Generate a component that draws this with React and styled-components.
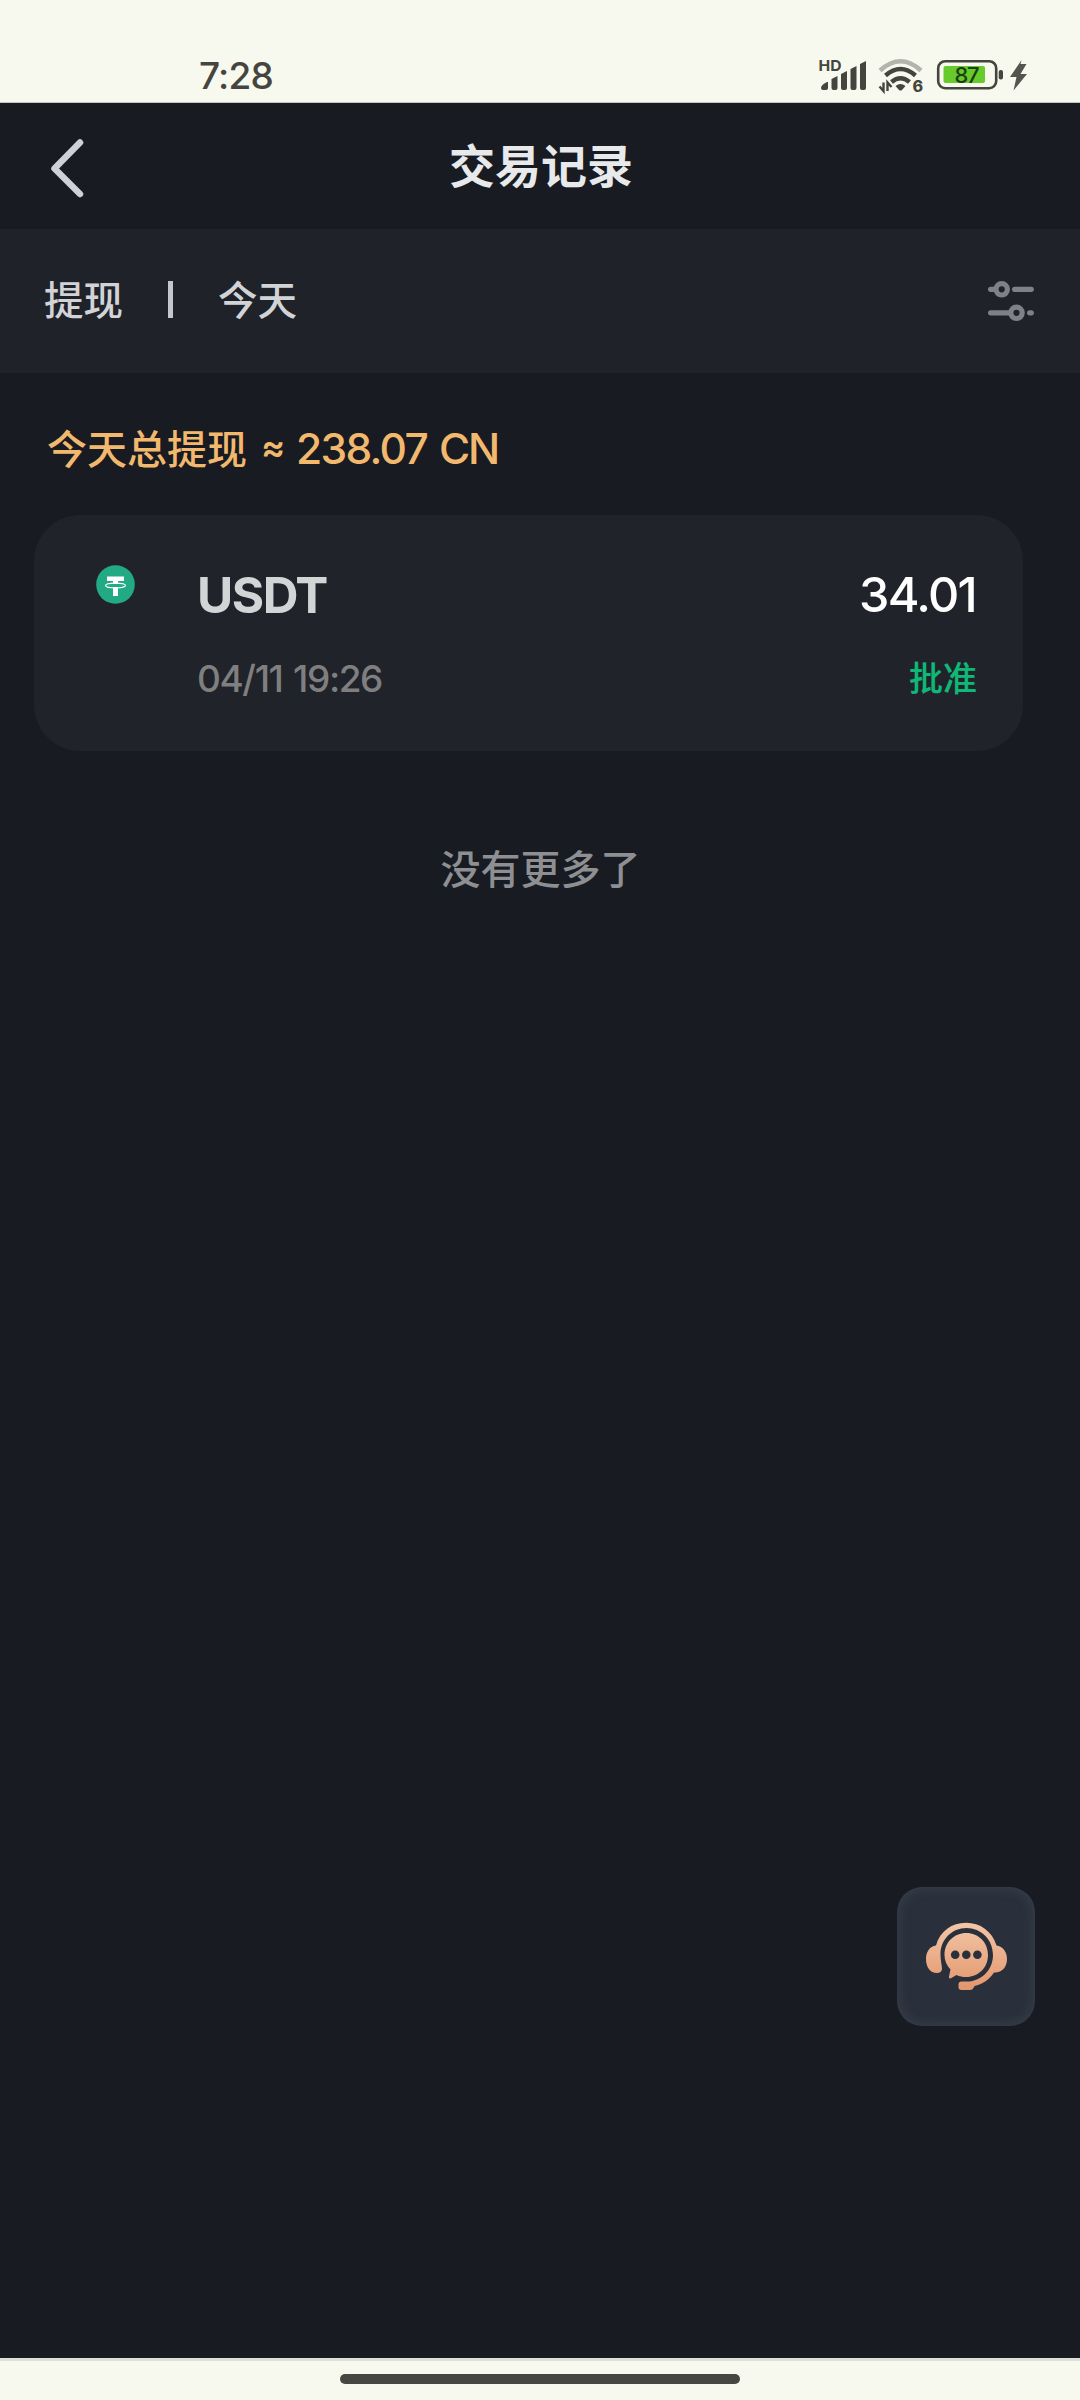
import React from 'react';
import styled, { createGlobalStyle } from 'styled-components';

const GlobalStyle = createGlobalStyle`
  body {
    margin: 0;
    background: #181b22;
    font-family: Inter, 'Noto Sans CJK SC', sans-serif;
    font-weight: 500;
  }
  * {
    box-sizing: border-box;
  }
`;

const Screen = styled.div`
  display: flex;
  flex-direction: column;
  width: 1080px;
  height: 2400px;
  background: #181b22;
  overflow: hidden;
`;

const StatusBar = styled.div`
  display: flex;
  justify-content: space-between;
  height: 103px;
  padding: 54px 50px 0 199px;
  background: #f8f9ee;
  border-bottom: 1px solid #c4c6c0;
`;

const Clock = styled.span`
  font-size: 37px;
  line-height: 43px;
  letter-spacing: -0.8px;
  color: #454540;
`;

const StatusIcons = styled.svg`
  display: block;
  width: 216px;
  height: 42px;
`;

const Header = styled.header`
  display: grid;
  grid-template-columns: 120px 1fr 118px;
  align-items: center;
  height: 126px;
`;

const BackButton = styled.button`
  width: 120px;
  height: 126px;
  padding: 0;
  border: none;
  background: none;
`;

const Title = styled.h1`
  margin: 0;
  font-size: 46px;
  font-weight: 700;
  line-height: 124px;
  text-align: center;
  color: #e8e9ea;
`;

const FilterBar = styled.div`
  display: flex;
  align-items: center;
  justify-content: space-between;
  height: 144px;
  padding: 0 45px 0 44px;
  background: #1f2229;
`;

const Filters = styled.div`
  display: flex;
  align-items: center;
  font-size: 39.5px;
  line-height: 60px;
  color: #d2d3d7;
`;

const Divider = styled.span`
  width: 5px;
  height: 37px;
  margin: 0 45px 3px 45px;
  background: #c6c7cb;
`;

const FilterGlyph = styled.svg`
  width: 48px;
  height: 48px;
  margin-bottom: 2px;
`;

const Content = styled.main`
  flex: 1;
  padding: 46px 0 0;
`;

const Summary = styled.div`
  display: flex;
  align-items: baseline;
  height: 60px;
  padding-left: 47px;
  font-size: 40px;
  line-height: 60px;
  white-space: pre;
  color: #f2b96e;
`;

const Approx = styled.span`
  width: 20px;
  margin: 0 15px 0 14px;
  font-size: 36px;
  font-weight: 600;
  line-height: 1;
  transform: translateY(-4px);
`;

const Total = styled.span`
  font-size: 42.5px;
  letter-spacing: ${(props) => props.$spacing || '0'};
  margin-right: ${(props) => props.$gap || '0'};
`;

const Card = styled.section`
  display: flex;
  width: 989px;
  height: 236px;
  margin: 36px 0 0 34px;
  padding: 0 46px 0 62px;
  border-radius: 46px;
  background: #20232a;
`;

const Coin = styled.svg`
  flex: none;
  width: 39px;
  height: 39px;
  margin-top: 50px;
`;

const Column = styled.div`
  display: flex;
  flex-direction: column;
  align-items: ${(props) => (props.$end ? 'flex-end' : 'flex-start')};
  margin-left: ${(props) => (props.$end ? 'auto' : '62px')};
  padding-top: 50px;
`;

const Currency = styled.span`
  font-size: 49.5px;
  font-weight: 700;
  line-height: 60px;
  letter-spacing: -1.5px;
  color: #d3d4d6;
`;

const Amount = styled.span`
  font-size: 48.5px;
  line-height: 60px;
  letter-spacing: -1.7px;
  margin-right: 1px;
  color: #ffffff;
`;

const Time = styled.span`
  margin-top: 24px;
  font-size: 37px;
  line-height: 60px;
  letter-spacing: -1.4px;
  word-spacing: 2px;
  color: #7f7f80;
`;

const Status = styled.span`
  margin-top: 24px;
  font-size: 34px;
  line-height: 60px;
  color: #0fb876;
  -webkit-text-stroke: 0.2px #0fb876;
`;

const EndOfList = styled.p`
  margin: 89px 0 0;
  padding-left: 1px;
  font-size: 40px;
  line-height: 60px;
  text-align: center;
  color: #8e8f92;
`;

const SupportButton = styled.button`
  position: fixed;
  left: 897px;
  top: 1887px;
  width: 138px;
  height: 139px;
  padding: 0;
  border: none;
  border-radius: 25px;
  background: #29303b;
  box-shadow: inset 0 0 14px rgba(130, 138, 150, 0.2);

  svg {
    display: block;
  }
`;

const NavBar = styled.div`
  display: flex;
  justify-content: center;
  height: 42px;
  padding-top: 13px;
  border-top: 3px solid #dfe0d8;
  background: #f8f9ee;
`;

const HomeIndicator = styled.div`
  width: 400px;
  height: 10px;
  border-radius: 5px;
  background: #474742;
`;

const DeviceStatus = () => (
  <StatusIcons viewBox="814 54 216 42">
    <text x="818.5" y="71" fontSize="15" fontWeight="700" fill="#454540" textLength="23" lengthAdjust="spacingAndGlyphs">HD</text>
    <g fill="#454540">
      <path d="M821 88q0-3 6-6h1v6q0 2-2 2h-3q-2 0-2-2z" />
      <path d="M831.5 79l6-3v12q0 2-2 2h-2q-2 0-2-2z" />
      <path d="M841 74l6-3v17q0 2-2 2h-2q-2 0-2-2z" />
      <path d="M850.5 69l6-3v22q0 2-2 2h-2q-2 0-2-2z" />
      <path d="M860 64l6-3v27q0 2-2 2h-2q-2 0-2-2z" />
    </g>
    <g fill="none" strokeWidth="4.5">
      <path d="M880 70.5Q900.5 52 921 70.5" stroke="#b3b4ac" />
      <path d="M885.5 75.5Q900.5 62.5 915.5 75.5" stroke="#454540" />
      <path d="M891.5 82Q900.5 74.5 909.5 82" stroke="#454540" />
    </g>
    <path d="M895.5 86q5-4 10 0l-3.5 4q-1.5 1.2-3 0z" fill="#454540" />
    <path d="M883.5 82.5v8.5l-4-4.5M887.5 91v-8.5l4 4.5" fill="none" stroke="#454540" strokeWidth="2.4" />
    <text x="912.5" y="91.5" fontSize="16" fontWeight="800" fill="#454540">6</text>
    <rect x="938.2" y="61.2" width="58" height="27" rx="7" fill="none" stroke="#454540" strokeWidth="2.6" />
    <rect x="943.5" y="66" width="41.5" height="17" rx="2" fill="#66cb2b" />
    <text x="954.5" y="82.8" fontSize="22" fontWeight="500" fill="#1e3d12" textLength="25">87</text>
    <rect x="998.7" y="70" width="4.3" height="9.5" rx="2" fill="#454540" />
    <path d="M1021.5 60L1010 77h6.5l-3 13.5L1027 74h-6.5l6-10h-6z" fill="#55554f" />
  </StatusIcons>
);

const BackIcon = () => (
  <svg width="120" height="126" viewBox="0 103 120 126">
    <path
      d="M80 142.5L54.5 168.5L80 194"
      fill="none"
      stroke="#d0d1d6"
      strokeWidth="6.5"
      strokeLinecap="round"
      strokeLinejoin="round"
    />
  </svg>
);

const FilterIcon = () => (
  <FilterGlyph viewBox="987 276 48 48">
    <g fill="none" stroke="#808187" strokeWidth="5.2" strokeLinecap="round">
      <path d="M990.6 289.3H995M1014.6 289.3H1031.3" />
      <path d="M990.6 312.8H1010M1029.6 312.8H1031.3" />
      <circle cx="1001.7" cy="289.3" r="5.7" />
      <circle cx="1016.5" cy="312.8" r="5.7" />
    </g>
  </FilterGlyph>
);

const TetherIcon = () => (
  <Coin viewBox="0 0 39 39">
    <circle cx="19.5" cy="19.5" r="19.3" fill="#22aa84" />
    <path d="M11 11.5h17v4.5h-6v3h-5v-3h-6zM17 22h5v9h-5z" fill="#fff" />
    <ellipse cx="19.5" cy="20.5" rx="10" ry="2.4" fill="none" stroke="#fff" strokeWidth="1.1" />
  </Coin>
);

const SupportIcon = () => (
  <svg width="138" height="139" viewBox="897 1887 138 139">
    <defs>
      <linearGradient id="peach" x1="0" y1="1922" x2="0" y2="1990" gradientUnits="userSpaceOnUse">
        <stop offset="0" stopColor="#f3c6a8" />
        <stop offset="1" stopColor="#e2966c" />
      </linearGradient>
    </defs>
    <g fill="url(#peach)">
      <path d="M936 1945.5C940 1931 952 1922.8 966 1922.8S992 1931 996.5 1945.5C1003 1946.5 1007 1952 1007 1959C1007 1967 1002 1973 994 1972.5C989 1980 982 1984.5 974.5 1986L973.5 1988Q972.5 1990 970 1990H961.5Q958.5 1990 958.5 1987V1984.5Q958.5 1981.5 961.5 1981.5H970C983 1979.5 993 1969 993 1955C993 1939.5 981 1928 966.5 1928S940.5 1939.5 940.5 1954C940.5 1961 942 1965 942 1969Q941.5 1973 937 1973C930 1973 926 1967 926 1959C926 1952 929.5 1946.5 936 1945.5Z" />
      <path d="M966.3 1933C978.5 1933 988 1942.5 988 1955S978.5 1977 966.3 1977C962.5 1977 959.5 1976.5 956.5 1975L950.5 1978.5Q948.5 1979 949 1976.5L950.5 1969.5C946.5 1965.5 944.5 1960.5 944.5 1955C944.5 1942.5 954 1933 966.3 1933Z" />
    </g>
    <g fill="#29303b">
      <circle cx="955.2" cy="1954.7" r="4.3" />
      <circle cx="966.3" cy="1954.7" r="4.3" />
      <circle cx="977.4" cy="1954.7" r="4.3" />
    </g>
  </svg>
);

const App = () => {
  return (
    <Screen>
      <GlobalStyle />
      <StatusBar>
        <Clock>7:28</Clock>
        <DeviceStatus />
      </StatusBar>
      <Header>
        <BackButton aria-label="返回">
          <BackIcon />
        </BackButton>
        <Title>交易记录</Title>
      </Header>
      <FilterBar>
        <Filters>
          <span>提现</span>
          <Divider />
          <span>今天</span>
        </Filters>
        <FilterIcon />
      </FilterBar>
      <Content>
        <Summary>
          <span>今天总提现</span>
          <Approx>≈</Approx>
          <Total $spacing="-1.7px" $gap="12px">238.07</Total>
          <Total $spacing="-2.2px">CN</Total>
        </Summary>
        <Card>
          <TetherIcon />
          <Column>
            <Currency>USDT</Currency>
            <Time>04/11 19:26</Time>
          </Column>
          <Column $end>
            <Amount>34.01</Amount>
            <Status>批准</Status>
          </Column>
        </Card>
        <EndOfList>没有更多了</EndOfList>
      </Content>
      <SupportButton aria-label="客服">
        <SupportIcon />
      </SupportButton>
      <NavBar>
        <HomeIndicator />
      </NavBar>
    </Screen>
  );
};

export default App;
